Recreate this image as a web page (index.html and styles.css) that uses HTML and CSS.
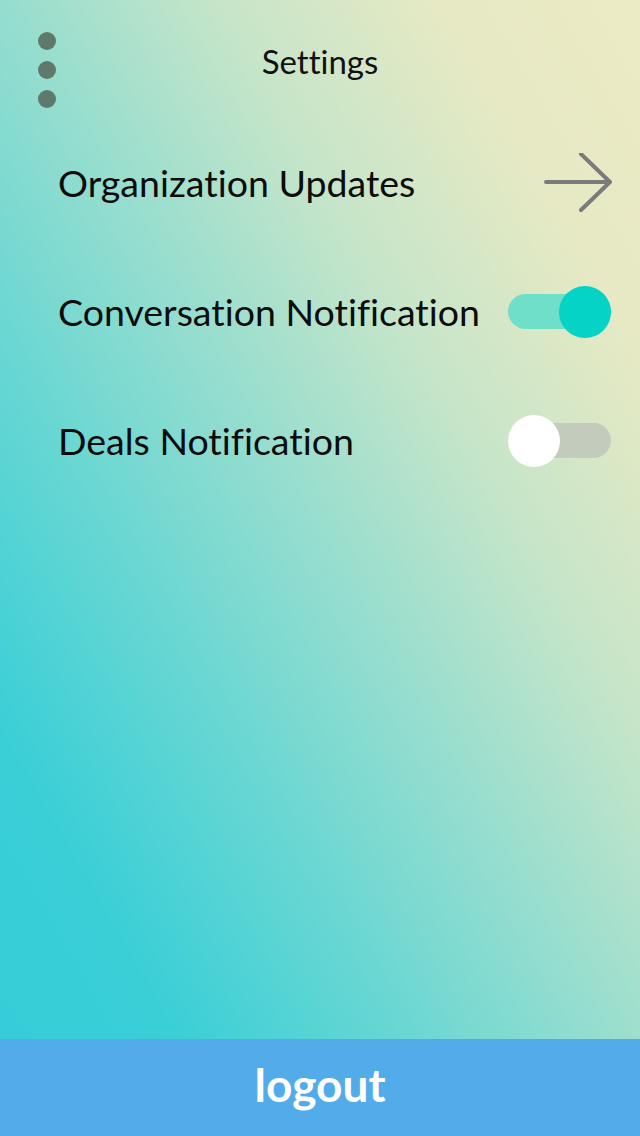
FILE: index.html
```html
<!DOCTYPE html>
<html>
<head>
<meta charset="utf-8">
<link rel="stylesheet" href="styles.css">
</head>
<body>
<div class="screen">
  <header class="topbar">
    <div class="menu"><span class="dot"></span><span class="dot"></span><span class="dot"></span></div>
    <h1 class="title">Settings</h1>
  </header>
  <main class="list">
    <div class="row">
      <span class="label">Organization Updates</span>
      <svg class="arrow" width="70" height="60" viewBox="0 0 70 60">
        <path d="M3 29 H67 M38 1 L67 29 L38 57" fill="none" stroke="#7b7b7b" stroke-width="4" stroke-linecap="round" stroke-linejoin="round"/>
      </svg>
    </div>
    <div class="row">
      <span class="label">Conversation Notification</span>
      <span class="toggle on"><span class="knob"></span></span>
    </div>
    <div class="row">
      <span class="label">Deals Notification</span>
      <span class="toggle off"><span class="knob"></span></span>
    </div>
  </main>
  <footer class="logout">logout</footer>
</div>
</body>
</html>
```

FILE: styles.css
```css
html, body {
  margin: 0;
  padding: 0;
}
body {
  width: 640px;
  height: 1136px;
  overflow: hidden;
  font-family: Lato, "Noto Sans", sans-serif;
  font-variant-ligatures: none;
}
.screen {
  width: 640px;
  height: 1136px;
  display: flex;
  flex-direction: column;
  background: linear-gradient(60deg, #33cdd8 0%, #3acfd7 18%, #64d6d3 34%, #93ddcf 50%, #c5e5c9 67%, #e6e9c4 84%, #ecebc5 100%);
}
.topbar {
  height: 118px;
  flex: none;
  position: relative;
}
.menu {
  display: flex;
  flex-direction: column;
  gap: 11px;
  padding: 32px 0 0 38px;
}
.dot {
  width: 18px;
  height: 18px;
  border-radius: 50%;
  background: #5f7a6c;
}
.title {
  position: absolute;
  left: 0;
  right: 0;
  top: 41px;
  margin: 0;
  text-align: center;
  font-weight: 400;
  font-size: 33px;
  line-height: 40px;
  color: #111;
}
.list {
  flex: 1;
  display: flex;
  flex-direction: column;
  padding: 0 29px 0 58px;
}
.row {
  height: 129px;
  display: flex;
  align-items: center;
  justify-content: space-between;
}
.label {
  font-size: 37.5px;
  color: #0c0c0c;
}
.arrow {
  display: block;
  margin-right: -2px;
}
.toggle {
  width: 103px;
  height: 35px;
  border-radius: 18px;
  display: flex;
  align-items: center;
}
.toggle.on {
  background: #6fdfca;
  justify-content: flex-end;
}
.toggle.off {
  background: #c3cbbc;
  justify-content: flex-start;
}
.knob {
  width: 52px;
  height: 52px;
  border-radius: 50%;
  flex: none;
}
.toggle.on .knob { background: #05d3c5; }
.toggle.off .knob { background: #ffffff; }
.logout {
  height: 97px;
  box-sizing: border-box;
  padding-bottom: 6px;
  flex: none;
  background: #52acea;
  color: #fff;
  font-weight: 700;
  font-size: 46px;
  display: flex;
  align-items: center;
  justify-content: center;
}
```
